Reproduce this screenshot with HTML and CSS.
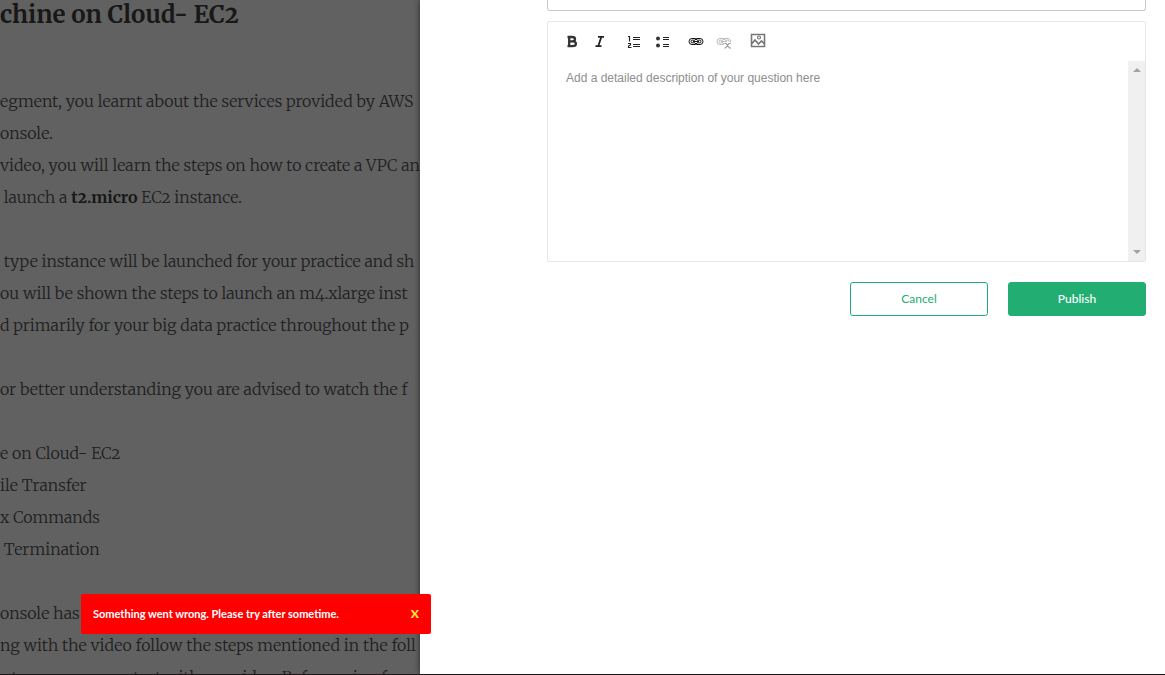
FILE: index.html
```html
<!DOCTYPE html>
<html lang="en">
<head>
<meta charset="utf-8">
<meta name="viewport" content="width=device-width, initial-scale=1">
<title>Ask a question</title>
<link rel="stylesheet" href="styles.css">
</head>
<body>
<div class="page">
  <article class="lesson">
    <h1 class="lesson-title">chine on Cloud- EC2</h1>
    <p>egment, you learnt about the services provided by AWS<br>onsole.</p>
    <p>video, you will learn the steps on how to create a VPC an<br>&nbsp;launch a <strong>t2.micro</strong> EC2 instance.</p>
    <p class="spaced">&nbsp;type instance will be launched for your practice and sh<br>ou will be shown the steps to launch an m4.xlarge inst<br>d primarily for your big data practice throughout the p</p>
    <p class="spaced">or better understanding you are advised to watch the f</p>
    <ul class="topics spaced">
      <li>e on Cloud- EC2</li>
      <li>ile Transfer</li>
      <li>x Commands</li>
      <li>&nbsp;Termination</li>
    </ul>
    <p class="spaced">onsole has r<br>ng with the video follow the steps mentioned in the foll<br>&nbsp; &nbsp;t &nbsp;way &nbsp;you can start with our video. Before going for</p>
  </article>

  <main class="drawer">
    <form class="question">
      <input class="question-title" type="text" aria-label="Question title">
      <div class="editor">
        <div class="toolbar" role="toolbar" aria-label="Formatting">
          <button type="button" class="tool" aria-label="Bold">
            <svg width="16" height="16" viewBox="0 0 16 16"><path d="M5.200 3V14M3.500 4H8c4 0 4 4.300 0 4.300H5M8.200 8.300c5 0 5 4.900 0 4.900H3.500" fill="none" stroke="#333" stroke-width="2.300"/></svg>
          </button>
          <button type="button" class="tool" aria-label="Italic">
            <svg width="16" height="16" viewBox="0 0 16 16"><path d="M6 3.800h6M3.500 13.200h6M9.300 4L6.300 13" fill="none" stroke="#222" stroke-width="1.800"/></svg>
          </button>
          <button type="button" class="tool group-start" aria-label="Numbered list">
            <svg width="16" height="16" viewBox="0 0 16 16"><path d="M7 4.500h7M7 6.500h7M7 11.500h7M7 13.500h7M2 3.500h1.500v5M2 10.500h2.500v1.500l-2 1v1.500h3" fill="none" stroke="#222" stroke-width="1.200"/></svg>
          </button>
          <button type="button" class="tool" aria-label="Bulleted list">
            <svg width="16" height="16" viewBox="0 0 16 16"><path d="M9 4.500h6M9 6.500h6M9 11.500h6M9 13.500h6" stroke="#222" stroke-width="1.200"/><circle cx="4" cy="5.500" r="2" fill="#333"/><circle cx="4" cy="12.500" r="2" fill="#333"/></svg>
          </button>
          <button type="button" class="tool group-start" aria-label="Link">
            <svg width="16" height="16" viewBox="0 0 16 16"><path d="M7.500 7V5.500H4a2.500 2.500 0 0 0 0 6h3.500V10M8.500 7V5.500H12a2.500 2.500 0 0 1 0 6H8.500V10M7 7.200H4.300a1.300 1.300 0 0 0 0 2.600H7M9 7.200h2.700a1.300 1.300 0 0 1 0 2.600H9M5 8.500h6" fill="none" stroke="#111"/></svg>
          </button>
          <button type="button" class="tool" aria-label="Unlink" disabled>
            <svg width="16" height="16" viewBox="0 0 16 16"><path d="M7.500 7V5.500H4a2.500 2.500 0 0 0 0 6h3.500V10M8.500 7V5.500H12a3 3 0 0 1 2.500 4M7 7.200H4.300a1.300 1.300 0 0 0 0 2.600H7M9 7.200h2.700a1.300 1.300 0 0 1 1.300 1.500M5 8.500h6" fill="none" stroke="#bbb"/><path d="M8.500 10.500H10l3.500 4.500H15M14.500 10.500H13L9.500 15H8.500" fill="none" stroke="#999" stroke-width="1.200"/></svg>
          </button>
          <button type="button" class="tool group-start" aria-label="Insert image">
            <svg width="16" height="16" viewBox="0 0 16 16"><path d="M1.500 1.500h13v12h-13zM2 10.500l3-3.500 3.500 4 3-3 3 3" fill="none" stroke="#777" stroke-width="1.600"/><circle cx="9" cy="4.500" r="1.500" fill="none" stroke="#777" stroke-width="1.200"/></svg>
          </button>
        </div>
        <div class="editor-body">
          <textarea class="editor-input" aria-label="Question description" placeholder="Add a detailed description of your question here"></textarea>
          <div class="scrollbar" aria-hidden="true">
            <svg width="8" height="4" viewBox="0 0 8 4"><path d="M4 0l4 4H0z" fill="#a3a3a3"/></svg>
            <svg width="8" height="4" viewBox="0 0 8 4"><path d="M0 0h8L4 4z" fill="#a3a3a3"/></svg>
          </div>
        </div>
      </div>
      <div class="actions">
        <button type="button" class="btn">Cancel</button>
        <button type="submit" class="btn btn-primary">Publish</button>
      </div>
    </form>
  </main>

  <div class="toast" role="alert">
    <span>Something went wrong. Please try after sometime.</span>
    <button type="button" class="toast-close" aria-label="Dismiss">X</button>
  </div>
</div>
</body>
</html>
```

FILE: styles.css
```css
* {
  box-sizing: border-box;
}

body {
  margin: 0;
  background: #fff;
  font-family: Lato, sans-serif;
}

button {
  font-family: inherit;
  cursor: pointer;
}

.page {
  position: relative;
  display: grid;
  grid-template-columns: 36.05% minmax(0, 1fr);
  height: 100vh;
  overflow: hidden;
  border-bottom: 1px solid #1b1518;
}

.lesson {
  min-width: 0;
  overflow: hidden;
  background: #616161;
  color: #202020;
  font-family: Merriweather, "DejaVu Serif Condensed", "DejaVu Serif", serif;
  font-variant-numeric: oldstyle-nums;
  font-weight: 300;
  font-size: 16px;
  line-height: 32px;
  white-space: nowrap;
}

.lesson p {
  margin: 0;
}

.lesson strong {
  color: #181818;
  font-weight: 700;
}

.lesson-title {
  margin: 0 0 56px;
  color: #181818;
  font-size: 24px;
  line-height: 29px;
  font-weight: 700;
}

.lesson .spaced {
  margin-top: 32px;
}

.topics {
  margin: 0;
  padding: 0;
  list-style: none;
}

.drawer {
  min-width: 0;
  padding: 0 19px 0 127px;
  background: #fff;
  box-shadow: 0 0 6px rgba(0, 0, 0, 0.6);
}

.question-title {
  display: block;
  width: 100%;
  height: 11px;
  padding: 0 12px;
  border: 1px solid #c8c8c8;
  border-top: 0;
  border-radius: 0 0 3px 3px;
  outline: 0;
}

.editor {
  margin-top: 10px;
  border: 1px solid #e6e6e6;
  border-radius: 2px;
}

.toolbar {
  display: flex;
  align-items: center;
  gap: 12px;
  height: 39px;
  padding: 0 0 2px 16px;
}

.tool {
  display: flex;
  padding: 0;
  border: 0;
  background: none;
}

.group-start {
  margin-left: 6px;
}

.editor-body {
  display: flex;
  height: 200px;
}

.editor-input {
  flex: 1;
  min-width: 0;
  padding: 8px 18px;
  border: 0;
  outline: 0;
  resize: none;
  overflow: hidden;
  font: 12px/18px "Liberation Sans", Arial, sans-serif;
}

.editor-input::placeholder {
  color: #8e8e8e;
}

.scrollbar {
  display: flex;
  flex-direction: column;
  align-items: center;
  justify-content: space-between;
  width: 17px;
  padding: 7px 0;
  background: #f0f0f0;
}

.actions {
  display: flex;
  justify-content: flex-end;
  gap: 20px;
  margin-top: 20px;
}

.btn {
  width: 138px;
  height: 34px;
  padding: 0 0 2px;
  border: 1px solid #22ae73;
  border-radius: 3px;
  background: #fff;
  color: #22ae73;
  font-size: 12px;
}

.btn-primary {
  background: #22ae73;
  color: #fff;
  font-weight: 500;
}

.toast {
  position: absolute;
  left: 81px;
  bottom: 40px;
  display: flex;
  align-items: center;
  justify-content: space-between;
  width: 350px;
  height: 40px;
  padding: 0 12px 2px;
  border-radius: 2px;
  background: #f00;
  color: #fff;
  font-size: 11px;
  font-weight: 700;
  white-space: nowrap;
}

.toast-close {
  padding: 0;
  border: 0;
  background: none;
  color: #ffeb3b;
  font-size: 12px;
  font-weight: 900;
}
```
